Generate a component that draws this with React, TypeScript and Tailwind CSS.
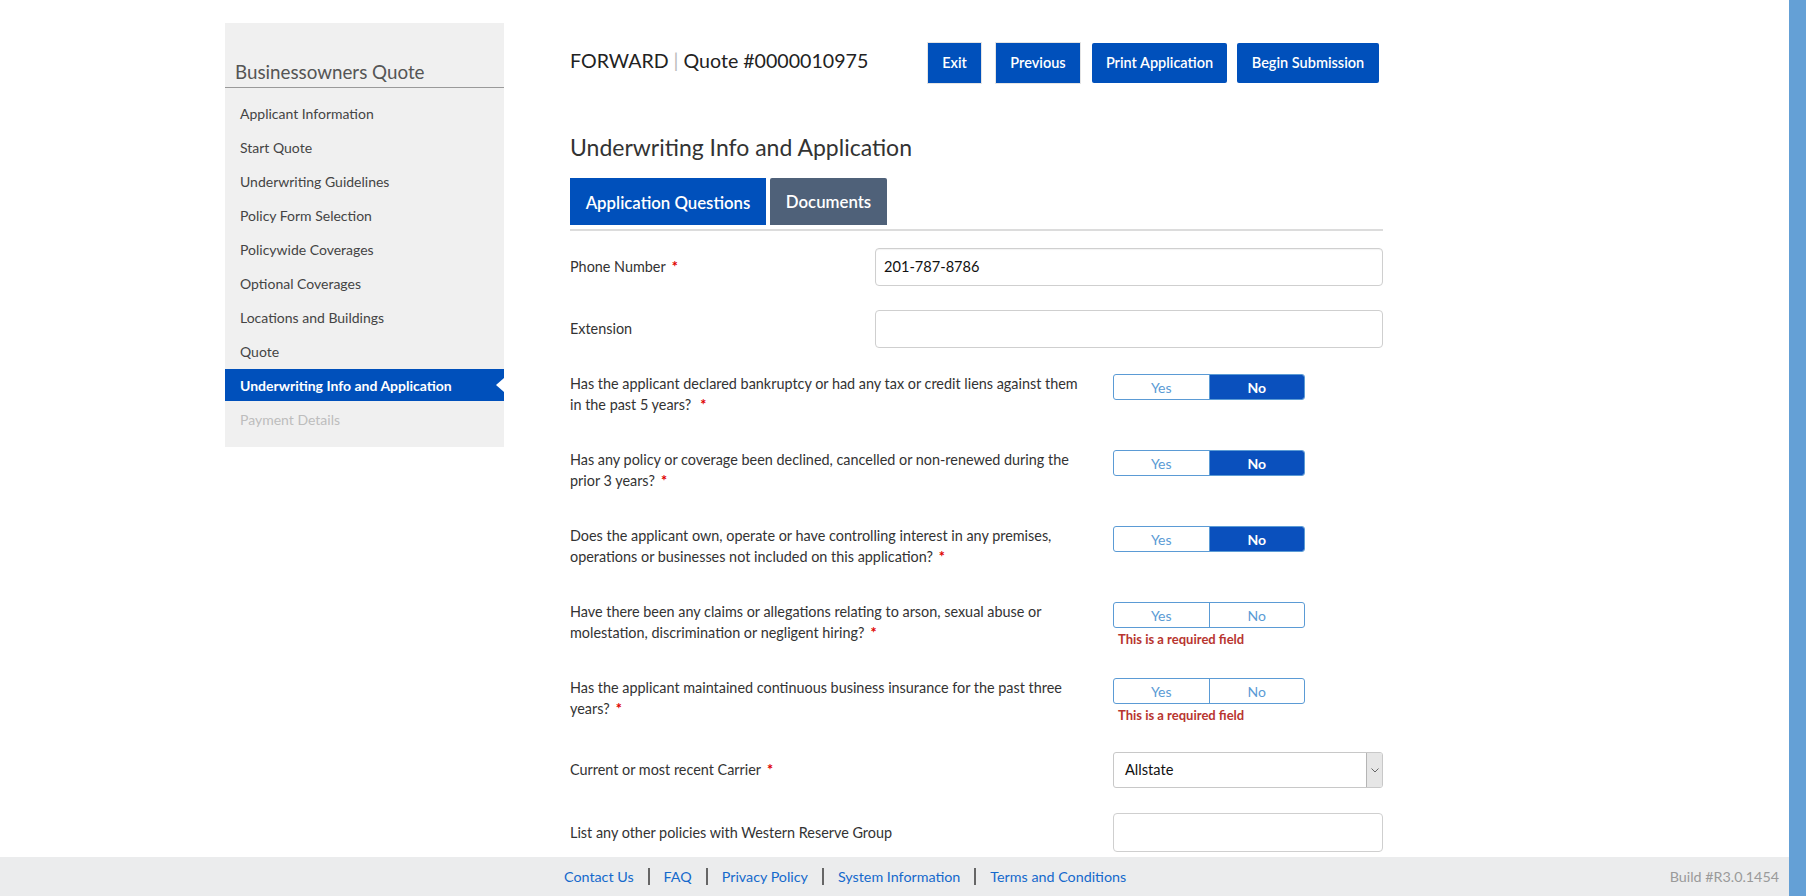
import React from "react";

const FONT = { fontFamily: "Lato, 'Open Sans', 'Liberation Sans', sans-serif" };

const navItems = [
  "Applicant Information",
  "Start Quote",
  "Underwriting Guidelines",
  "Policy Form Selection",
  "Policywide Coverages",
  "Optional Coverages",
  "Locations and Buildings",
  "Quote",
  "Underwriting Info and Application",
  "Payment Details",
];

function Req({ wide }: { wide?: boolean }) {
  return <span className={`text-[#e00000] font-bold ${wide ? "ml-[9px]" : "ml-[6px]"}`}>*</span>;
}

function Toggle({ value, error }: { value?: "yes" | "no"; error?: boolean }) {
  return (
    <div className="flex flex-col">
      <div className="flex h-[26px] w-[192px] rounded-[3px] border border-[#5b9bd5] overflow-hidden text-[14px]">
        <div className="flex-1 flex items-center justify-center text-[#5b9bd5] border-r border-[#5b9bd5]">Yes</div>
        <div
          className={`flex-1 flex items-center justify-center ${
            value === "no" ? "bg-[#0a50bd] text-white font-bold" : "text-[#5b9bd5]"
          }`}
        >
          No
        </div>
      </div>
      {error && (
        <div className="mt-[3px] ml-[5px] text-[13px] leading-[16px] font-bold text-[#b8352f]">This is a required field</div>
      )}
    </div>
  );
}

function QRow({
  lines,
  value,
  error,
  wide,
  h,
}: {
  lines: [string, string];
  value?: "yes" | "no";
  error?: boolean;
  wide?: boolean;
  h: string;
}) {
  return (
    <div className={`flex ${h}`}>
      <div className="w-[543px] text-[14.4px] leading-[21px] text-[#333] -mt-[1px]">
        {lines[0]}
        <br />
        {lines[1]}
        <Req wide={wide} />
      </div>
      <Toggle value={value} error={error} />
    </div>
  );
}

export default function App() {
  return (
    <div className="flex h-[896px] w-full overflow-hidden bg-white" style={FONT}>
      <div className="flex flex-1 flex-col min-w-0">
        <div className="flex flex-1 overflow-hidden pt-[23px] pl-[225px]">
          {/* Sidebar */}
          <aside className="w-[279px] self-start bg-[#f0f0f0] pt-[36px] pb-[10px]">
            <div className="border-b border-[#9a9a9a] px-[10px] pb-[3px] text-[18.8px] leading-[25px] text-[#555]">
              Businessowners Quote
            </div>
            <nav className="mt-[9px] flex flex-col">
              {navItems.map((item, i) => {
                const active = i === 8;
                const disabled = i === 9;
                return (
                  <div
                    key={item}
                    className={`relative mb-[2px] flex h-[32px] items-center px-[15px] text-[14px] ${
                      active
                        ? "bg-[#0050bb] text-white font-bold"
                        : disabled
                        ? "text-[#bdbdbd]"
                        : "text-[#444]"
                    }`}
                  >
                    {item}
                    {active && (
                      <span className="absolute right-0 top-1/2 -translate-y-1/2 h-0 w-0 border-y-[7px] border-r-[8px] border-y-transparent border-r-white" />
                    )}
                  </div>
                );
              })}
            </nav>
          </aside>

          {/* Main */}
          <main className="ml-[66px] w-[813px] pt-[20px]">
            <div className="flex h-[40px] items-start">
              <div className="mt-[5px] text-[19.6px] leading-[26px] text-[#222]">
                FORWARD<span className="mx-[5px] text-[#bbb]">|</span>Quote #0000010975
              </div>
              <div className="ml-auto mr-[4px] flex h-[40px] text-[14.5px] text-white font-semibold">
                <button className="h-[40px] w-[53px] bg-[#0050bb] shadow-[0_0_0_1px_#e4e4e4]">Exit</button>
                <button className="ml-[15px] h-[40px] w-[84px] bg-[#0050bb] shadow-[0_0_0_1px_#e4e4e4]">Previous</button>
                <button className="ml-[12px] h-[40px] w-[135px] rounded-[2px] bg-[#0050bb]">Print Application</button>
                <button className="ml-[10px] h-[40px] w-[142px] rounded-[2px] bg-[#0050bb]">Begin Submission</button>
              </div>
            </div>

            <h1 className="mt-[50px] text-[23px] leading-[28px] text-[#333]">Underwriting Info and Application</h1>

            <div className="mt-[17px] flex gap-[4px]">
              <div className="flex h-[47px] w-[196px] items-center justify-center bg-[#0050bb] pt-[2px] text-[16.8px] font-semibold text-white">
                Application Questions
              </div>
              <div className="flex h-[47px] w-[117px] items-center justify-center rounded-t-[2px] bg-[#4f6179] text-[16.8px] font-semibold text-white">
                Documents
              </div>
            </div>
            <div className="mt-[4px] h-[2px] bg-[#dcdcdc]" />

            {/* Phone */}
            <div className="mt-[17px] flex h-[38px] items-center">
              <div className="w-[305px] text-[14.4px] text-[#333]">
                Phone Number
                <Req />
              </div>
              <div className="flex h-[38px] w-[508px] items-center rounded-[4px] border border-[#cfcfcf] px-[8px] text-[14.6px] text-[#111] shadow-[inset_0_1px_1px_rgba(0,0,0,0.05)]">
                201-787-8786
              </div>
            </div>

            {/* Extension */}
            <div className="mt-[24px] flex h-[38px] items-center">
              <div className="w-[305px] text-[14.4px] text-[#333]">Extension</div>
              <div className="h-[38px] w-[508px] rounded-[4px] border border-[#cfcfcf]" />
            </div>

            <div className="mt-[26px] flex flex-col">
              <QRow
                h="h-[76px]"
                value="no"
                wide
                lines={["Has the applicant declared bankruptcy or had any tax or credit liens against them", "in the past 5 years?"]}
              />
              <QRow
                h="h-[76px]"
                value="no"
                lines={["Has any policy or coverage been declined, cancelled or non-renewed during the", "prior 3 years?"]}
              />
              <QRow
                h="h-[76px]"
                value="no"
                lines={["Does the applicant own, operate or have controlling interest in any premises,", "operations or businesses not included on this application?"]}
              />
              <QRow
                h="h-[76px]"
                error
                lines={["Have there been any claims or allegations relating to arson, sexual abuse or", "molestation, discrimination or negligent hiring?"]}
              />
              <QRow
                h="h-[74px]"
                error
                lines={["Has the applicant maintained continuous business insurance for the past three", "years?"]}
              />
            </div>

            {/* Carrier */}
            <div className="flex h-[61px] items-start">
              <div className="flex h-[36px] w-[543px] items-center text-[14.4px] text-[#333]">
                Current or most recent Carrier
                <Req />
              </div>
              <div className="flex h-[36px] w-[270px] overflow-hidden rounded-[3px] border border-[#c8c8c8]">
                <div className="flex flex-1 items-center px-[11px] text-[14.6px] text-[#111]">Allstate</div>
                <div className="flex w-[16px] items-center justify-center border-l border-[#b5b5b5] bg-[#e6e6e6]">
                  <svg width="8" height="5" viewBox="0 0 8 5">
                    <path d="M0.5 0.5 L4 4 L7.5 0.5" stroke="#666" strokeWidth="1" fill="none" />
                  </svg>
                </div>
              </div>
            </div>

            {/* List other policies */}
            <div className="flex h-[39px] items-center">
              <div className="w-[543px] text-[14.4px] text-[#333]">List any other policies with Western Reserve Group</div>
              <div className="h-[39px] w-[270px] rounded-[4px] border border-[#cfcfcf]" />
            </div>
          </main>
        </div>

        {/* Footer */}
        <footer className="flex h-[39px] shrink-0 items-center bg-[#ebeced] pl-[564px] pr-[10px] text-[14.3px]">
          <a className="text-[#1469cc]">Contact Us</a>
          <span className="mx-[14px] h-[17px] w-[2px] bg-[#666]" />
          <a className="text-[#1469cc]">FAQ</a>
          <span className="mx-[14px] h-[17px] w-[2px] bg-[#666]" />
          <a className="text-[#1469cc]">Privacy Policy</a>
          <span className="mx-[14px] h-[17px] w-[2px] bg-[#666]" />
          <a className="text-[#1469cc]">System Information</a>
          <span className="mx-[14px] h-[17px] w-[2px] bg-[#666]" />
          <a className="text-[#1469cc]">Terms and Conditions</a>
          <span className="ml-auto text-[#9a9a9a]">Build #R3.0.1454</span>
        </footer>
      </div>
      <div className="w-[17px] shrink-0 bg-[#64a0d6]" />
    </div>
  );
}
